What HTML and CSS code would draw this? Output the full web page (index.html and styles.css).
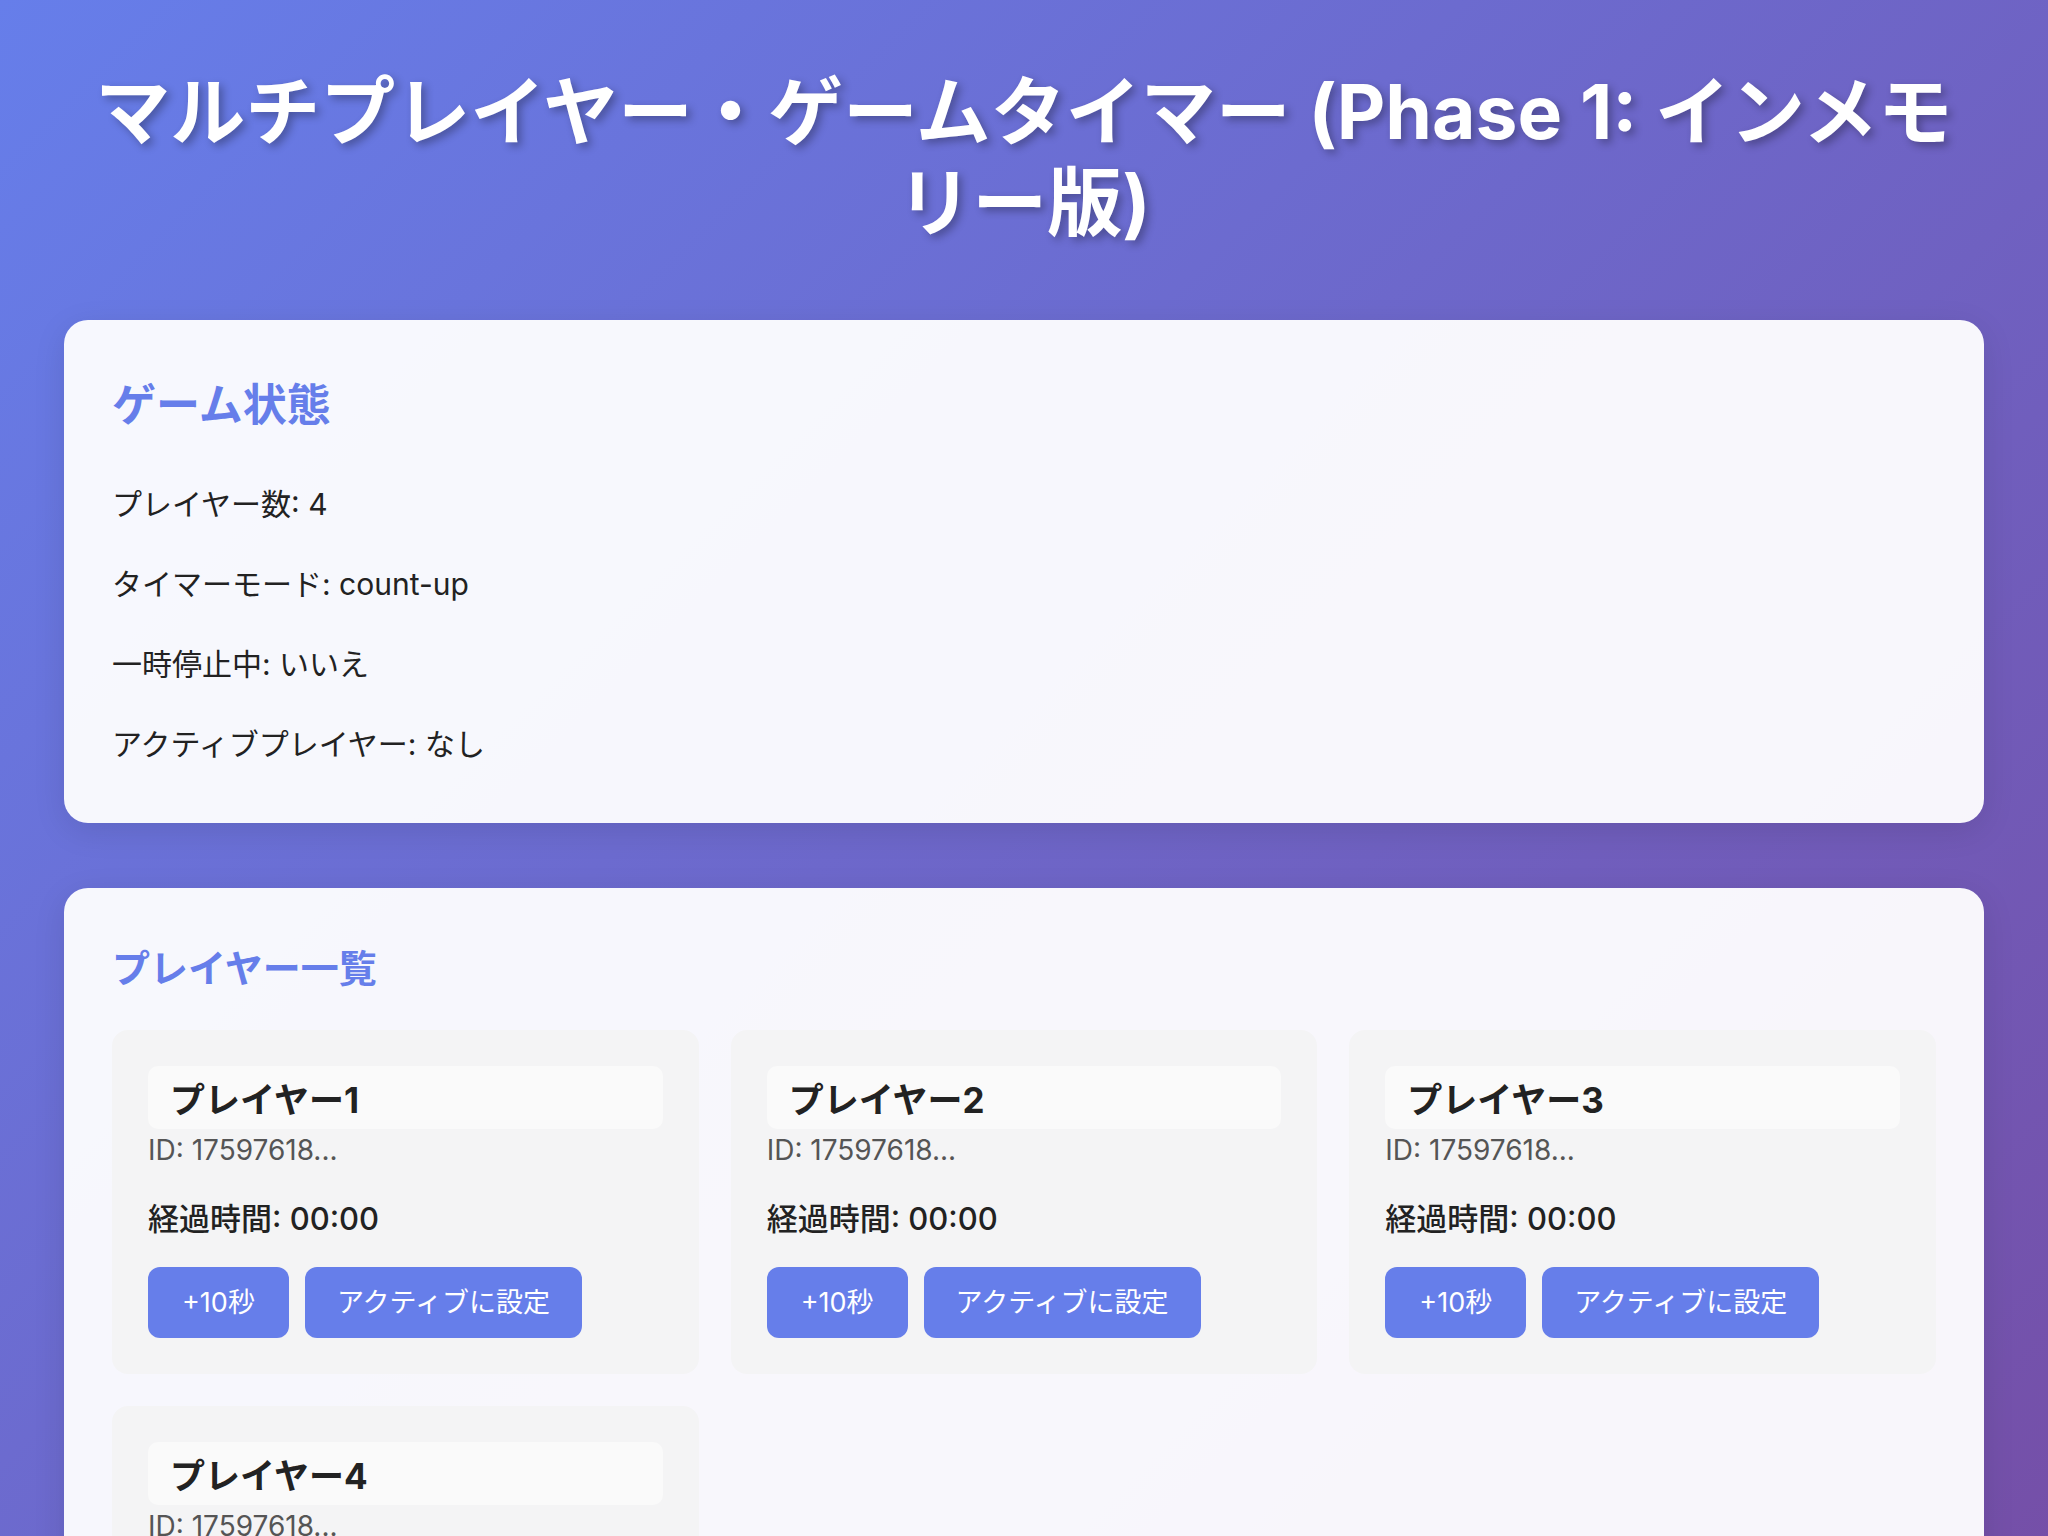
FILE: index.html
```html
<!DOCTYPE html>
<html lang="ja">
<head>
<meta charset="utf-8">
<title>マルチプレイヤー・ゲームタイマー</title>
<link rel="stylesheet" href="styles.css">
</head>
<body>
<div class="page">
  <h1 class="title">マルチプレイヤー・ゲームタイマー (Phase 1: インメモリー版)</h1>

  <section class="panel status-panel">
    <h2 class="panel-title">ゲーム状態</h2>
    <div class="status-list">
      <p class="status-item">プレイヤー数: 4</p>
      <p class="status-item">タイマーモード: count-up</p>
      <p class="status-item">一時停止中: いいえ</p>
      <p class="status-item">アクティブプレイヤー: なし</p>
    </div>
  </section>

  <section class="panel players-panel">
    <h2 class="panel-title players-title">プレイヤー一覧</h2>
    <div class="player-grid">
      <div class="player-card">
        <input class="name-input" type="text" value="プレイヤー1">
        <div class="player-id">ID: 17597618...</div>
        <div class="player-time">経過時間: 00:00</div>
        <div class="player-actions">
          <button class="btn">+10秒</button>
          <button class="btn">アクティブに設定</button>
        </div>
      </div>
      <div class="player-card">
        <input class="name-input" type="text" value="プレイヤー2">
        <div class="player-id">ID: 17597618...</div>
        <div class="player-time">経過時間: 00:00</div>
        <div class="player-actions">
          <button class="btn">+10秒</button>
          <button class="btn">アクティブに設定</button>
        </div>
      </div>
      <div class="player-card">
        <input class="name-input" type="text" value="プレイヤー3">
        <div class="player-id">ID: 17597618...</div>
        <div class="player-time">経過時間: 00:00</div>
        <div class="player-actions">
          <button class="btn">+10秒</button>
          <button class="btn">アクティブに設定</button>
        </div>
      </div>
      <div class="player-card">
        <input class="name-input" type="text" value="プレイヤー4">
        <div class="player-id">ID: 17597618...</div>
        <div class="player-time">経過時間: 00:00</div>
        <div class="player-actions">
          <button class="btn">+10秒</button>
          <button class="btn">アクティブに設定</button>
        </div>
      </div>
    </div>
  </section>
</div>
</body>
</html>
```
FILE: styles.css
```css
* {
  box-sizing: border-box;
}

html,
body {
  margin: 0;
}

body {
  font-family: Inter, "Noto Sans CJK JP", sans-serif;
  background: linear-gradient(135deg, #667eea 0%, #764ba2 100%);
  color: #222;
  min-height: 100vh;
}

.page {
  padding: 66px 64px 64px;
}

.title {
  margin: 0 0 72px;
  text-align: center;
  color: #fff;
  font-size: 75px;
  line-height: 91px;
  font-weight: 700;
  line-break: strict;
  text-shadow: 4px 4px 8px rgba(0, 0, 0, 0.3);
}

.panel {
  background: rgba(255, 255, 255, 0.95);
  border-radius: 24px;
  padding: 48px;
  box-shadow: 0 8px 32px rgba(0, 0, 0, 0.1);
}

.panel + .panel {
  margin-top: 65px;
}

.panel-title {
  margin: 0;
  color: #667eea;
  font-size: 44px;
  line-height: 66px;
  font-weight: 700;
}

.players-title {
  font-size: 38px;
  line-height: 64px;
}

.status-panel {
  padding-top: 52px;
  padding-bottom: 55px;
}

.status-list {
  display: flex;
  flex-direction: column;
  gap: 32px;
  margin-top: 42px;
}

.status-item {
  margin: 0;
  font-size: 30px;
  line-height: 48px;
}

.player-grid {
  display: grid;
  grid-template-columns: repeat(3, 1fr);
  gap: 32px;
  margin-top: 30px;
}

.player-card {
  background: #f4f4f5;
  border-radius: 16px;
  padding: 36px;
}

.name-input {
  display: block;
  width: 100%;
  height: 63px;
  border: none;
  outline: none;
  background: #fafafa;
  border-radius: 10px;
  padding: 0 22px;
  font-family: Inter, "Noto Sans CJK JP", sans-serif;
  font-size: 35px;
  font-weight: 700;
  color: #222;
}

.player-id {
  font-size: 28px;
  line-height: 42px;
  color: #555;
}

.player-time {
  margin-top: 24px;
  font-size: 31px;
  line-height: 48px;
  font-weight: 500;
  color: #222;
}

.player-actions {
  display: flex;
  gap: 16px;
  margin-top: 24px;
}

.btn {
  background: #667eea;
  color: #fff;
  border: none;
  border-radius: 12px;
  padding: 16px 32px;
  font-family: Inter, "Noto Sans CJK JP", sans-serif;
  font-size: 27px;
  line-height: 39px;
  font-weight: 400;
}

.btn:first-child {
  padding: 16px 34px;
}
```
